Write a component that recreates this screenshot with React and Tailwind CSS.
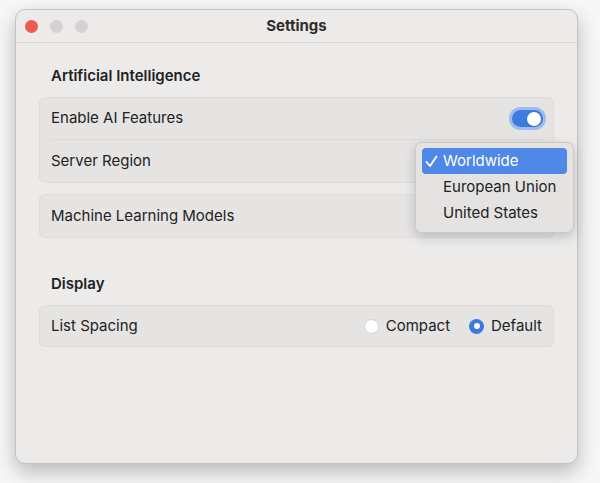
import React, { useState } from 'react';

const font = { fontFamily: 'Inter, "Noto Sans", "Liberation Sans", sans-serif' };

const Toggle = ({ on }) => (
  <div className="rounded-full p-[3px] bg-[#9dbcef]">
    <div className={`w-[31px] h-[17px] rounded-full flex items-center px-[2px] ${on ? 'bg-[#3b7ce0] justify-end' : 'bg-[#d6d5d4] justify-start'}`}>
      <div className="w-[14px] h-[14px] rounded-full bg-white shadow-sm" />
    </div>
  </div>
);

const Radio = ({ checked, label }) => (
  <div className="flex items-center gap-[7px]">
    {checked ? (
      <div className="w-[15px] h-[15px] rounded-full bg-[#3a7be0] flex items-center justify-center">
        <div className="w-[6px] h-[6px] rounded-full bg-white" />
      </div>
    ) : (
      <div className="w-[15px] h-[15px] rounded-full bg-white border border-[#d4d3d2]" />
    )}
    <span>{label}</span>
  </div>
);

export default function App() {
  const [enabled] = useState(true);
  const regions = ['Worldwide', 'European Union', 'United States'];

  return (
    <div className="w-[600px] h-[483px] bg-[#f7f7f7] pt-[9px] pl-[15px]" style={font}>
      <div className="relative w-[563px] h-[455px] rounded-[10px] bg-[#ecebea] border border-[#c4c3c2] shadow-[0_8px_20px_rgba(0,0,0,0.25)] text-[15px] text-[#222]">
        {/* title bar */}
        <div className="relative h-[33px] border-b border-[#d9d8d7] flex items-center pl-[9px] gap-[12px]">
          <div className="w-[13px] h-[13px] rounded-full bg-[#ee5a52]" />
          <div className="w-[13px] h-[13px] rounded-full bg-[#d3d2d1]" />
          <div className="w-[13px] h-[13px] rounded-full bg-[#d3d2d1]" />
          <div className="absolute inset-0 flex items-center justify-center font-bold text-[15px] text-[#2d2d2d]">
            Settings
          </div>
        </div>

        <div className="px-[23px] pt-[23px]">
          <div className="pl-[12px] font-semibold h-[20px] leading-[20px]">Artificial Intelligence</div>

          <div className="mt-[11px] rounded-[6px] bg-[#e5e4e3] border border-[#dedddc]">
            <div className="h-[41px] flex items-center justify-between pl-[11px] pr-[7px]">
              <span>Enable AI Features</span>
              <Toggle on={enabled} />
            </div>
            <div className="mx-[11px] border-t border-[#dcdbda]" />
            <div className="h-[42px] flex items-center pl-[11px]">
              <span>Server Region</span>
            </div>
          </div>

          <div className="mt-[11px] h-[44px] rounded-[6px] bg-[#e5e4e3] border border-[#dedddc] flex items-center pl-[11px]">
            <span>Machine Learning Models</span>
          </div>

          <div className="mt-[36px] pl-[12px] font-semibold h-[20px] leading-[20px]">Display</div>

          <div className="mt-[11px] h-[42px] rounded-[6px] bg-[#e5e4e3] border border-[#dedddc] flex items-center justify-between pl-[11px] pr-[11px]">
            <span>List Spacing</span>
            <div className="flex items-center gap-[19px]">
              <Radio label="Compact" />
              <Radio checked label="Default" />
            </div>
          </div>
        </div>

        {/* region popup menu */}
        <div className="absolute left-[399px] top-[132px] w-[159px] rounded-[7px] bg-[#e4e3e2] border border-[#cbcac9] shadow-[0_4px_12px_rgba(0,0,0,0.18)] px-[6px] pt-[5px] pb-[6px]">
          {regions.map((r, i) => (
            <div
              key={r}
              className={`h-[26px] flex items-center rounded-[4px] ${i === 0 ? 'bg-[#4f88e6] text-white' : 'text-[#222]'}`}
            >
              <span className="w-[21px] pl-[3px] flex items-center">
                {i === 0 && (
                  <svg width="13" height="13" viewBox="0 0 13 13" fill="none">
                    <path d="M1.5 7 L5 11 L11.5 1.5" stroke="white" strokeWidth="1.8" strokeLinecap="round" strokeLinejoin="round" />
                  </svg>
                )}
              </span>
              <span>{r}</span>
            </div>
          ))}
        </div>
      </div>
    </div>
  );
}
